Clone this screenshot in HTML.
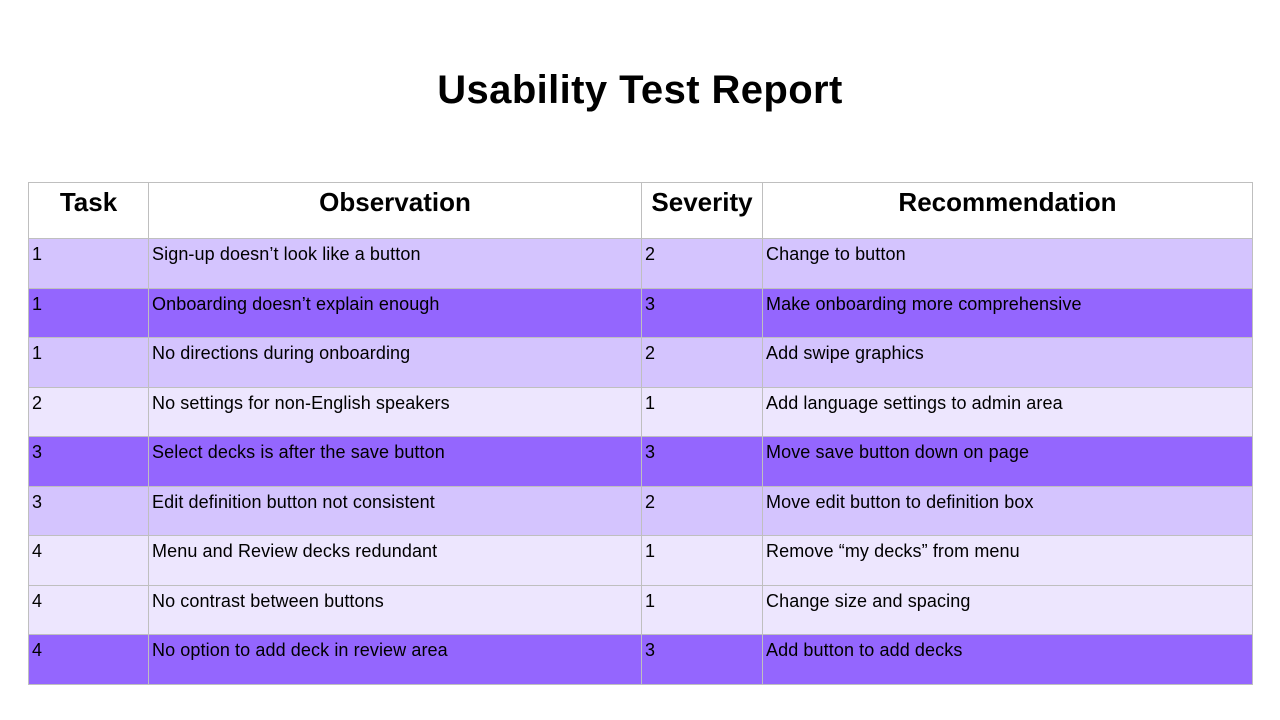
<!DOCTYPE html>
<html><head><meta charset="utf-8"><style>
body{margin:0;width:1280px;height:720px;background:#fff;position:relative;font-family:"Liberation Sans",Arial,sans-serif;overflow:hidden}
h1{position:absolute;top:68px;left:0;width:1280px;text-align:center;margin:0;font-size:40px;font-weight:bold;letter-spacing:0.4px;color:#000}
.r{position:absolute;left:28px;width:1225px;display:flex;box-sizing:border-box}
.c{box-sizing:border-box;border-left:1px solid #bfbfbf;border-top:1px solid #bfbfbf;padding:5px 0 0 3px;font-size:18px;letter-spacing:0.1px;color:#000;height:100%}
.c:last-child{border-right:1px solid #bfbfbf}
.w1{width:120px}.w2{width:493px}.w3{width:121px}.w4{width:491px}
.h .c{text-align:center;font-weight:bold;font-size:26px;padding:4px 0 0;letter-spacing:0}
.a{background:#d4c4fe}.b{background:#9466fe}.l{background:#ede6fe}
.last{border-bottom:1px solid #bfbfbf}
</style></head><body>
<h1>Usability Test Report</h1>
<div class="r h" style="top:182px;height:56px"><div class="c w1">Task</div><div class="c w2">Observation</div><div class="c w3">Severity</div><div class="c w4">Recommendation</div></div>
<div class="r a" style="top:238px;height:50px"><div class="c w1">1</div><div class="c w2">Sign-up doesn’t look like a button</div><div class="c w3">2</div><div class="c w4">Change to button</div></div>
<div class="r b" style="top:288px;height:49px"><div class="c w1">1</div><div class="c w2">Onboarding doesn’t explain enough</div><div class="c w3">3</div><div class="c w4">Make onboarding more comprehensive</div></div>
<div class="r a" style="top:337px;height:50px"><div class="c w1">1</div><div class="c w2">No directions during onboarding</div><div class="c w3">2</div><div class="c w4">Add swipe graphics</div></div>
<div class="r l" style="top:387px;height:49px"><div class="c w1">2</div><div class="c w2">No settings for non-English speakers</div><div class="c w3">1</div><div class="c w4">Add language settings to admin area</div></div>
<div class="r b" style="top:436px;height:50px"><div class="c w1">3</div><div class="c w2">Select decks is after the save button</div><div class="c w3">3</div><div class="c w4">Move save button down on page</div></div>
<div class="r a" style="top:486px;height:49px"><div class="c w1">3</div><div class="c w2">Edit definition button not consistent</div><div class="c w3">2</div><div class="c w4">Move edit button to definition box</div></div>
<div class="r l" style="top:535px;height:50px"><div class="c w1">4</div><div class="c w2">Menu and Review decks redundant</div><div class="c w3">1</div><div class="c w4">Remove “my decks” from menu</div></div>
<div class="r l" style="top:585px;height:49px"><div class="c w1">4</div><div class="c w2">No contrast between buttons</div><div class="c w3">1</div><div class="c w4">Change size and spacing</div></div>
<div class="r b last" style="top:634px;height:51px"><div class="c w1">4</div><div class="c w2">No option to add deck in review area</div><div class="c w3">3</div><div class="c w4">Add button to add decks</div></div>
</body></html>
